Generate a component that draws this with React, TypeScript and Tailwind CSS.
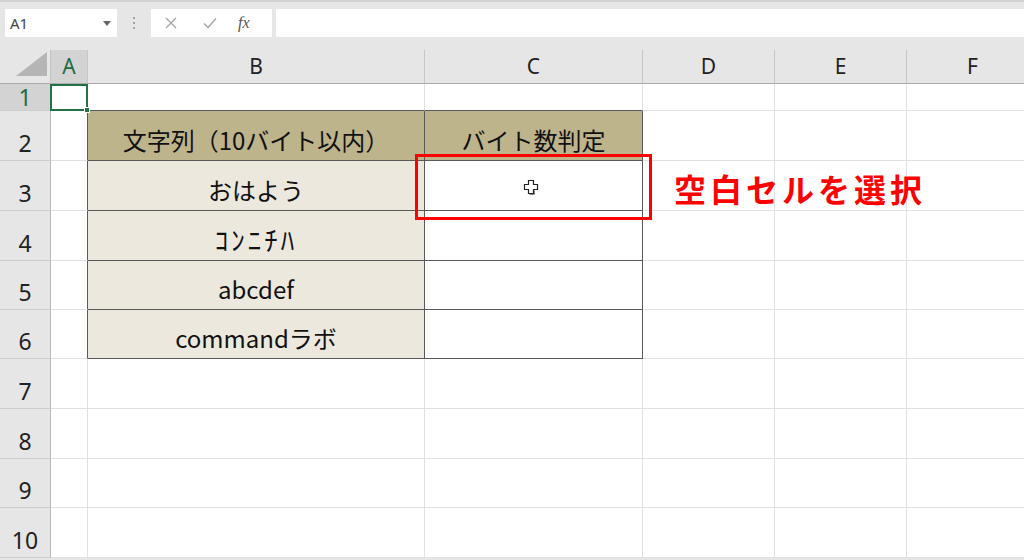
import clsx from 'clsx';

const COLS = ['A', 'B', 'C', 'D', 'E', 'F'];
const ROWS = [1, 2, 3, 4, 5, 6, 7, 8, 9, 10];

const DATA: Record<string, string> = {
  B2: '文字列（10バイト以内）',
  C2: 'バイト数判定',
  B3: 'おはよう',
  B4: 'ｺﾝﾆﾁﾊ',
  B5: 'abcdef',
  B6: 'commandラボ',
};

const inTable = (col: string, row: number) => (col === 'B' || col === 'C') && row >= 2 && row <= 6;

function cellClass(col: string, row: number) {
  const t = inTable(col, row);
  return clsx(
    'relative flex items-center justify-center border-r border-b',
    t || (col === 'A' && row >= 2 && row <= 6) ? 'border-r-[#595959]' : 'border-r-[#e1e1e1]',
    t || ((col === 'B' || col === 'C') && row === 1) ? 'border-b-[#595959]' : 'border-b-[#e1e1e1]',
    !t ? 'bg-white' : row === 2 ? 'bg-[#bdb48c]' : col === 'B' ? 'bg-[#ece8de]' : 'bg-white'
  );
}

function Cursor() {
  return (
    <svg width="16" height="16" viewBox="0 0 16 16" className="-ml-[6px] mt-[2px]">
      <path d="M5.5 1.5h5v4h4v5h-4v4h-5v-4h-4v-5h4z" fill="#fff" stroke="#222" strokeWidth="1.2" />
      <path d="M6.5 15.5h5v-4" fill="none" stroke="#888" strokeWidth="1" />
    </svg>
  );
}

function Toolbar() {
  return (
    <div className="h-[50px] border-t-2 border-[#d2d2d2] bg-[#e6e6e6] flex items-start pt-[7px] pl-[5px]">
      <div className="w-[112px] h-[28px] bg-white flex items-center justify-between pl-[5px] pr-[6px]">
        <span className="text-[15px] text-[#444] font-['Noto_Sans',sans-serif]">A1</span>
        <svg width="8" height="5" viewBox="0 0 8 5"><path d="M0 0h8L4 5z" fill="#666" /></svg>
      </div>
      <div className="w-[34px] h-[28px] flex flex-col items-center justify-center gap-[3px]">
        <span className="w-[2px] h-[2px] bg-[#a3a3a3]" />
        <span className="w-[2px] h-[2px] bg-[#a3a3a3]" />
        <span className="w-[2px] h-[2px] bg-[#a3a3a3]" />
      </div>
      <div className="w-[121px] h-[28px] bg-white flex items-center">
        <svg width="12" height="12" viewBox="0 0 12 12" className="ml-[14px]">
          <path d="M1 1l10 10M11 1L1 11" stroke="#a5a5a5" strokeWidth="1.3" />
        </svg>
        <svg width="14" height="12" viewBox="0 0 14 12" className="ml-[26px]">
          <path d="M1 6.5l4 4L13 1.5" fill="none" stroke="#a5a5a5" strokeWidth="1.4" />
        </svg>
        <span className="ml-[21px] text-[16px] italic text-[#555] font-['Liberation_Serif',serif]">fx</span>
      </div>
      <div className="ml-[4px] flex-1 h-[28px] bg-white" />
    </div>
  );
}

export default function App() {
  return (
    <div className="w-[1024px] h-[560px] overflow-hidden bg-[#e6e6e6] font-['Noto_Sans','Noto_Sans_CJK_JP',sans-serif]">
      <Toolbar />
      <div className="grid grid-cols-[51px_37px_337px_218px_132px_132px_132px] grid-rows-[34px_27px_50px_50px_50px_49px_49px_50px_50px_49px_50px]">
        <div className="flex items-end justify-end pr-[3px] pb-[7px] border-r border-b border-r-[#c4c4c4] border-b-[#ababab] bg-[#e6e6e6]">
          <svg width="31" height="24" viewBox="0 0 31 24"><path d="M31 0v24H0z" fill="#b5b5b5" /></svg>
        </div>
        {COLS.map(c => (
          <div
            key={c}
            className={clsx(
              'flex items-center justify-center border-r border-b border-r-[#c6c6c6] border-b-[#ababab] text-[21px]',
              c === 'A' ? 'bg-[#d3d3d3] text-[#1e6b41]' : 'bg-[#e6e6e6] text-[#222]'
            )}
          >
            {c}
          </div>
        ))}
        {ROWS.map(r => (
          <div key={r} className="contents">
            <div
              className={clsx(
                'flex justify-center border-r border-b border-r-[#b8b8b8] border-b-[#cdcdcd] text-[23px] leading-none',
                r === 1 ? 'items-center bg-[#d3d3d3] text-[#1e6b41]' : 'items-end pb-[5px] bg-[#e6e6e6] text-[#222]'
              )}
            >
              {r}
            </div>
            {COLS.map(c => {
              const key = `${c}${r}`;
              return (
                <div key={key} className={cellClass(c, r)}>
                  {DATA[key] && (
                    <span
                      className={clsx(
                        'pt-2 leading-none whitespace-nowrap text-[#111] font-["Noto_Sans_CJK_JP",sans-serif]',
                        key === 'B4' ? 'text-[27px] tracking-[3px]' : 'text-[24px]'
                      )}
                    >
                      {DATA[key]}
                    </span>
                  )}
                  {key === 'A1' && (
                    <div className="absolute -left-px top-0 -right-px -bottom-px border-2 border-[#217346] z-10">
                      <span className="absolute -right-[4px] -bottom-[4px] w-[6px] h-[6px] bg-[#217346] border border-white" />
                    </div>
                  )}
                  {key === 'C3' && (
                    <>
                      <Cursor />
                      <div className="absolute -left-[10px] -right-[10px] -top-[7px] -bottom-[10px] border-[3px] border-[#ff0000] z-10" />
                    </>
                  )}
                  {key === 'D3' && (
                    <div className="absolute left-[31px] top-0 bottom-0 flex items-center pt-[5px] z-10 whitespace-nowrap text-[32px] font-bold tracking-[4px] text-[#ff0000] font-['Noto_Sans_CJK_JP',sans-serif] leading-none">
                      空白セルを選択
                    </div>
                  )}
                </div>
              );
            })}
          </div>
        ))}
      </div>
    </div>
  );
}
